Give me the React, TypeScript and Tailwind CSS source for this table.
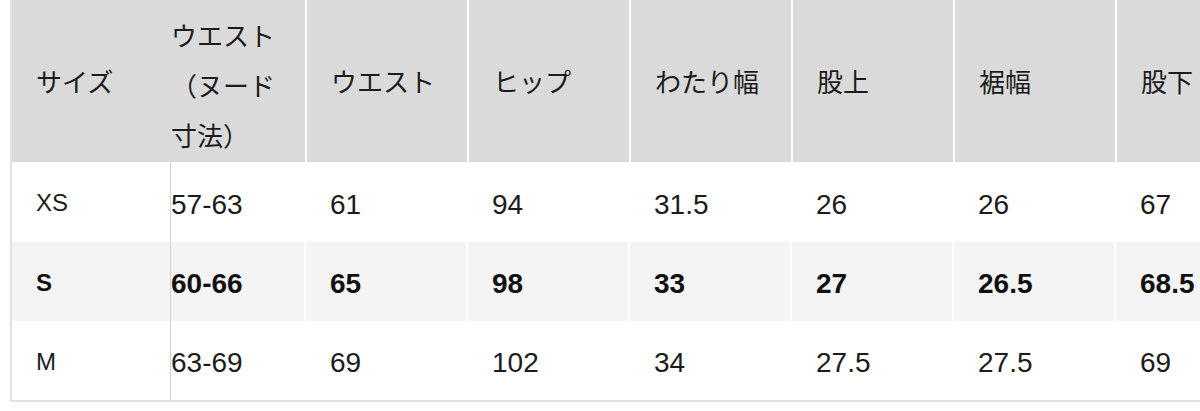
const font = { fontFamily: '"Liberation Sans", "Noto Sans CJK JP", sans-serif' };

type Row = { size: string; values: string[]; bold?: boolean; shaded?: boolean; height: string };

const headers = ['ウエスト', 'ヒップ', 'わたり幅', '股上', '裾幅', '股下'];

const rows: Row[] = [
  { size: 'XS', values: ['57-63', '61', '94', '31.5', '26', '26', '67'], height: 'h-[80px]' },
  { size: 'S', values: ['60-66', '65', '98', '33', '27', '26.5', '68.5'], bold: true, shaded: true, height: 'h-[79px]' },
  { size: 'M', values: ['63-69', '69', '102', '34', '27.5', '27.5', '69'], height: 'h-[79px]' },
];

export default function App() {
  return (
    <div className="w-[1200px] h-[411px] overflow-hidden bg-white text-[#1c1c1c]" style={font}>
      <div className="ml-[10px] w-[1400px] border-l-2 border-b-2 border-[#e2e2e2]">
        {/* Header */}
        <div className="flex h-[162px] bg-[#dadada] text-[26px]">
          <div className="w-[159px] shrink-0 flex items-center pl-[24px] pt-[4px]">サイズ</div>
          <div className="w-[136px] shrink-0 border-r-2 border-white pt-[12px] leading-[50px]">
            ウエスト
            <br />
            （ヌード
            <br />
            寸法）
          </div>
          {headers.map((h) => (
            <div key={h} className="w-[162px] shrink-0 border-r-2 border-white flex items-center pl-[24px] pt-[4px]">
              {h}
            </div>
          ))}
        </div>

        {/* Body */}
        {rows.map((row) => (
          <div
            key={row.size}
            className={`flex ${row.height} ${row.shaded ? 'bg-[#f4f4f4]' : 'bg-white'} ${row.bold ? 'font-bold text-[#111]' : ''}`}
          >
            <div className="w-[159px] shrink-0 border-r border-[#d2d2d2] flex items-center pl-[24px] pt-[2px] text-[24px]">
              {row.size}
            </div>
            {row.values.map((v, i) => (
              <div
                key={i}
                className={`${i === 0 ? 'w-[135px] pl-0' : 'w-[162px] pl-[24px]'} shrink-0 border-r-2 border-white flex items-center pt-[5px] text-[28px]`}
              >
                {v}
              </div>
            ))}
          </div>
        ))}
      </div>
    </div>
  );
}
